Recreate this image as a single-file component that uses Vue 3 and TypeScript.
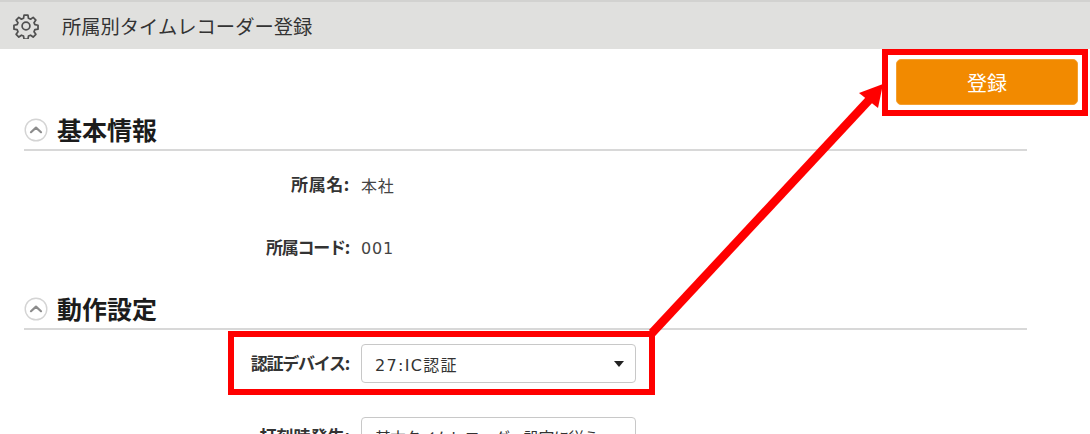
<script setup lang="ts">
</script>

<template>
  <div class="page">
    <header class="titlebar">
      <svg class="gear" width="26" height="26" viewBox="0 0 24 24" fill="none" stroke="#505050" stroke-width="1.6" stroke-linejoin="round" stroke-linecap="round">
        <circle cx="12" cy="12" r="3.6" />
        <path d="M10.2 2h3.6l.5 2.9 1.9.8 2.4-1.7 2.5 2.5-1.7 2.4.8 1.9 2.9.5v3.6l-2.9.5-.8 1.9 1.7 2.4-2.5 2.5-2.4-1.7-1.9.8-.5 2.9h-3.6l-.5-2.9-1.9-.8-2.4 1.7-2.5-2.5 1.7-2.4-.8-1.9-2.9-.5v-3.6l2.9-.5.8-1.9-1.7-2.4 2.5-2.5 2.4 1.7 1.9-.8z" />
      </svg>
      <span class="title">所属別タイムレコーダー登録</span>
    </header>

    <main class="content">
      <div class="actions">
        <button class="primary" type="button">登録</button>
      </div>

      <section class="section first">
        <div class="section-head">
          <svg class="toggle" width="24" height="24" viewBox="0 0 24 24" fill="none">
            <circle cx="12" cy="12" r="10.8" stroke="#d4d4d4" stroke-width="1.4" />
            <path d="M7 14.2 12 9.6l5 4.6" stroke="#8c8c8c" stroke-width="2.2" stroke-linecap="round" stroke-linejoin="round" />
          </svg>
          <h2>基本情報</h2>
        </div>
        <div class="row text-row first-row">
          <span class="label wide">所属名:</span>
          <span class="value">本社</span>
        </div>
        <div class="row text-row second-row">
          <span class="label kana">所属コード:</span>
          <span class="value">001</span>
        </div>
      </section>

      <section class="section second">
        <div class="section-head">
          <svg class="toggle" width="24" height="24" viewBox="0 0 24 24" fill="none">
            <circle cx="12" cy="12" r="10.8" stroke="#d4d4d4" stroke-width="1.4" />
            <path d="M7 14.2 12 9.6l5 4.6" stroke="#8c8c8c" stroke-width="2.2" stroke-linecap="round" stroke-linejoin="round" />
          </svg>
          <h2>動作設定</h2>
        </div>
        <div class="row select-row">
          <span class="label kana">認証デバイス:</span>
          <div class="select">
            <span class="spaced">27:IC認証</span>
            <i class="caret"></i>
          </div>
        </div>
        <div class="row select-row next">
          <span class="label">打刻時発生:</span>
          <div class="select">
            <span class="tight">基本タイムレコーダー設定に従う</span>
            <i class="caret"></i>
          </div>
        </div>
      </section>
    </main>

    <div class="mark mark-button"></div>
    <div class="mark mark-select"></div>
    <svg class="arrow" width="1090" height="434" viewBox="0 0 1090 434">
      <path d="M652 333 870 99" stroke="#ff0000" stroke-width="8.5" fill="none" />
      <path d="M883 84 859 93 878 108z" fill="#ff0000" />
    </svg>
  </div>
</template>

<style>
html, body { margin: 0; padding: 0; background: #fff; overflow: hidden; }
</style>

<style scoped>
.page {
  position: relative;
  width: 1090px;
  height: 434px;
  overflow: hidden;
  background: #fff;
  font-family: "Noto Sans CJK JP", "Noto Sans", sans-serif;
  color: #333;
}
.titlebar {
  box-sizing: border-box;
  height: 49px;
  display: flex;
  align-items: center;
  background: #e0e0de;
  border-top: 2px solid #d2d2d0;
  padding-left: 13px;
}
.gear { flex: none; }
.title {
  margin-left: 23px;
  font-size: 19.3px;
  color: #333;
  white-space: nowrap;
}
.content { padding: 0 63px 0 24px; }
.actions {
  display: flex;
  justify-content: flex-end;
  margin-right: -51px;
  padding-top: 10px;
}
.primary {
  width: 182px;
  height: 46px;
  border: 1px solid #f5a030;
  border-radius: 5px;
  background: #f28a00;
  color: #fff;
  font: inherit;
  font-size: 20px;
  padding: 0;
}
.section.first { margin-top: 8px; }
.section.second { margin-top: 32px; }
.section-head {
  box-sizing: border-box;
  display: flex;
  align-items: center;
  height: 38px;
  border-bottom: 2px solid #d8d8d8;
  padding-bottom: 4px;
}
.toggle { flex: none; margin-top: 2px; }
h2 {
  margin: 0 0 0 9px;
  font-size: 25px;
  font-weight: 700;
  color: #1c1c1c;
  line-height: 32px;
}
.row { display: flex; align-items: center; }
.label {
  width: 326px;
  padding-bottom: 3px;
  text-align: right;
  font-size: 17px;
  font-weight: 700;
  color: #333;
  white-space: nowrap;
}
.label.kana { letter-spacing: -1.25px; padding-right: 1px; width: 325px; }
.label.wide { letter-spacing: 0.6px; }
.value {
  margin-left: 11px;
  font-family: "DejaVu Sans", "Noto Sans CJK JP", sans-serif;
  font-size: 16px;
  letter-spacing: 0.8px;
  color: #444;
}
.text-row { height: 24px; }
.first-row { margin-top: 22px; }
.second-row { margin-top: 39px; }
.select-row { margin-top: 14px; }
.select-row.next { margin-top: 34px; }
.select {
  box-sizing: border-box;
  flex: none;
  margin-left: 11px;
  width: 275px;
  height: 39px;
  display: flex;
  align-items: center;
  justify-content: space-between;
  padding: 0 11px 0 13px;
  border: 1px solid #c8c8c8;
  border-radius: 4px;
  font-size: 16px;
  color: #333;
  white-space: nowrap;
}
.spaced {
  font-family: "DejaVu Sans", "Noto Sans CJK JP", sans-serif;
  letter-spacing: 1.3px;
}
.tight { letter-spacing: -1.1px; }
.caret {
  flex: none;
  width: 0;
  height: 0;
  border-left: 5px solid transparent;
  border-right: 5px solid transparent;
  border-top: 6px solid #222;
}
.mark {
  position: absolute;
  box-sizing: border-box;
  border: 6px solid #ff0000;
}
.mark-button { left: 882px; top: 49px; width: 206px; height: 67px; }
.mark-select { left: 228px; top: 331px; width: 427px; height: 64px; }
.arrow { position: absolute; left: 0; top: 0; pointer-events: none; }
</style>
